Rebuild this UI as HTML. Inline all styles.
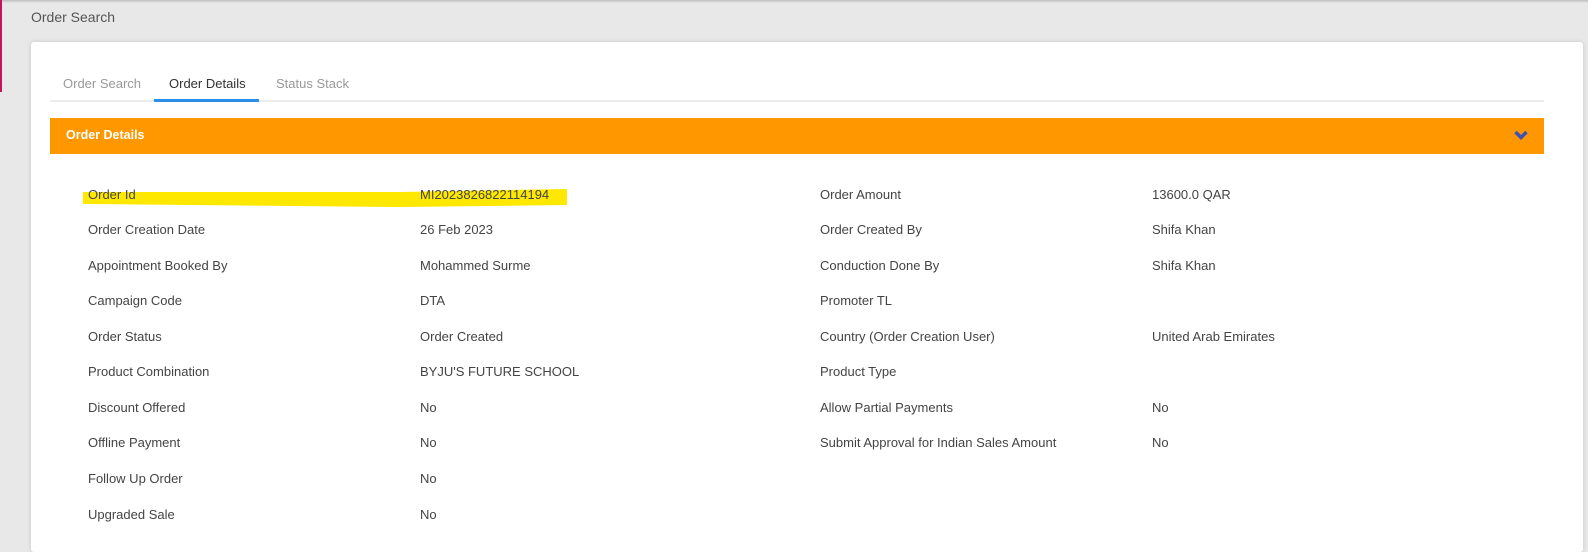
<!DOCTYPE html>
<html><head><style>
*{margin:0;padding:0;box-sizing:border-box}
body{width:1588px;height:543px;background:#e8e8e8;font-family:"Liberation Sans",sans-serif;position:relative;overflow:hidden;color:#444}
.top{position:absolute;left:0;top:0;width:1588px;height:3px;background:linear-gradient(#bdbdbd,#e8e8e8)}
.red{position:absolute;left:0;top:0;width:2px;height:92px;background:#c2185b}
.title{position:absolute;left:31px;top:9px;font-size:14px;color:#555}
.card{position:absolute;left:31px;top:42px;width:1552px;height:510px;background:#fff;border-radius:3px;box-shadow:0 0 4px rgba(0,0,0,.15)}
.tabs{position:absolute;left:50px;top:100px;width:1494px;height:2px;background:#ececec}
.tab{position:absolute;top:76px;font-size:13px;color:#999}
.act{color:#333}
.ul{position:absolute;left:154px;top:99px;width:105px;height:3px;background:#2b8ee8}
.bar{position:absolute;left:50px;top:118px;width:1494px;height:36px;background:#ff9800}
.bar span{position:absolute;left:16px;top:10px;color:#fff;font-weight:bold;font-size:12.5px}
.row{position:absolute;font-size:13px;color:#444}
</style></head><body>
<div class="top"></div><div class="red"></div>
<div class="title">Order Search</div>
<div class="card"></div>
<div class="tab" style="left:63px">Order Search</div>
<div class="tab act" style="left:169px">Order Details</div>
<div class="tab" style="left:276px">Status Stack</div>
<div class="tabs"></div><div class="ul"></div>
<div class="bar"><span>Order Details</span>
<svg style="position:absolute;left:1464px;top:12px" width="14" height="10" viewBox="0 0 14 10"><path d="M1.5 2 L7 7.5 L12.5 2" stroke="#3f51b5" stroke-width="3.5" fill="none"/></svg></div>
<svg style="position:absolute;left:0;top:0" width="1588" height="543"><path d="M83 192 L400 192 L567 189 L567 205 L400 207 L83 204 Z" fill="#ffe800"/></svg>
<div class="row" style="left:88px;top:187px">Order Id</div><div class="row" style="left:420px;top:187px">MI2023826822114194</div>
<div class="row" style="left:820px;top:187px">Order Amount</div><div class="row" style="left:1152px;top:187px">13600.0 QAR</div>
<div class="row" style="left:88px;top:222px">Order Creation Date</div><div class="row" style="left:420px;top:222px">26 Feb 2023</div>
<div class="row" style="left:820px;top:222px">Order Created By</div><div class="row" style="left:1152px;top:222px">Shifa Khan</div>
<div class="row" style="left:88px;top:258px">Appointment Booked By</div><div class="row" style="left:420px;top:258px">Mohammed Surme</div>
<div class="row" style="left:820px;top:258px">Conduction Done By</div><div class="row" style="left:1152px;top:258px">Shifa Khan</div>
<div class="row" style="left:88px;top:293px">Campaign Code</div><div class="row" style="left:420px;top:293px">DTA</div>
<div class="row" style="left:820px;top:293px">Promoter TL</div>
<div class="row" style="left:88px;top:329px">Order Status</div><div class="row" style="left:420px;top:329px">Order Created</div>
<div class="row" style="left:820px;top:329px">Country (Order Creation User)</div><div class="row" style="left:1152px;top:329px">United Arab Emirates</div>
<div class="row" style="left:88px;top:364px">Product Combination</div><div class="row" style="left:420px;top:364px">BYJU'S FUTURE SCHOOL</div>
<div class="row" style="left:820px;top:364px">Product Type</div>
<div class="row" style="left:88px;top:400px">Discount Offered</div><div class="row" style="left:420px;top:400px">No</div>
<div class="row" style="left:820px;top:400px">Allow Partial Payments</div><div class="row" style="left:1152px;top:400px">No</div>
<div class="row" style="left:88px;top:435px">Offline Payment</div><div class="row" style="left:420px;top:435px">No</div>
<div class="row" style="left:820px;top:435px">Submit Approval for Indian Sales Amount</div><div class="row" style="left:1152px;top:435px">No</div>
<div class="row" style="left:88px;top:471px">Follow Up Order</div><div class="row" style="left:420px;top:471px">No</div>
<div class="row" style="left:88px;top:507px">Upgraded Sale</div><div class="row" style="left:420px;top:507px">No</div>
</body></html>
